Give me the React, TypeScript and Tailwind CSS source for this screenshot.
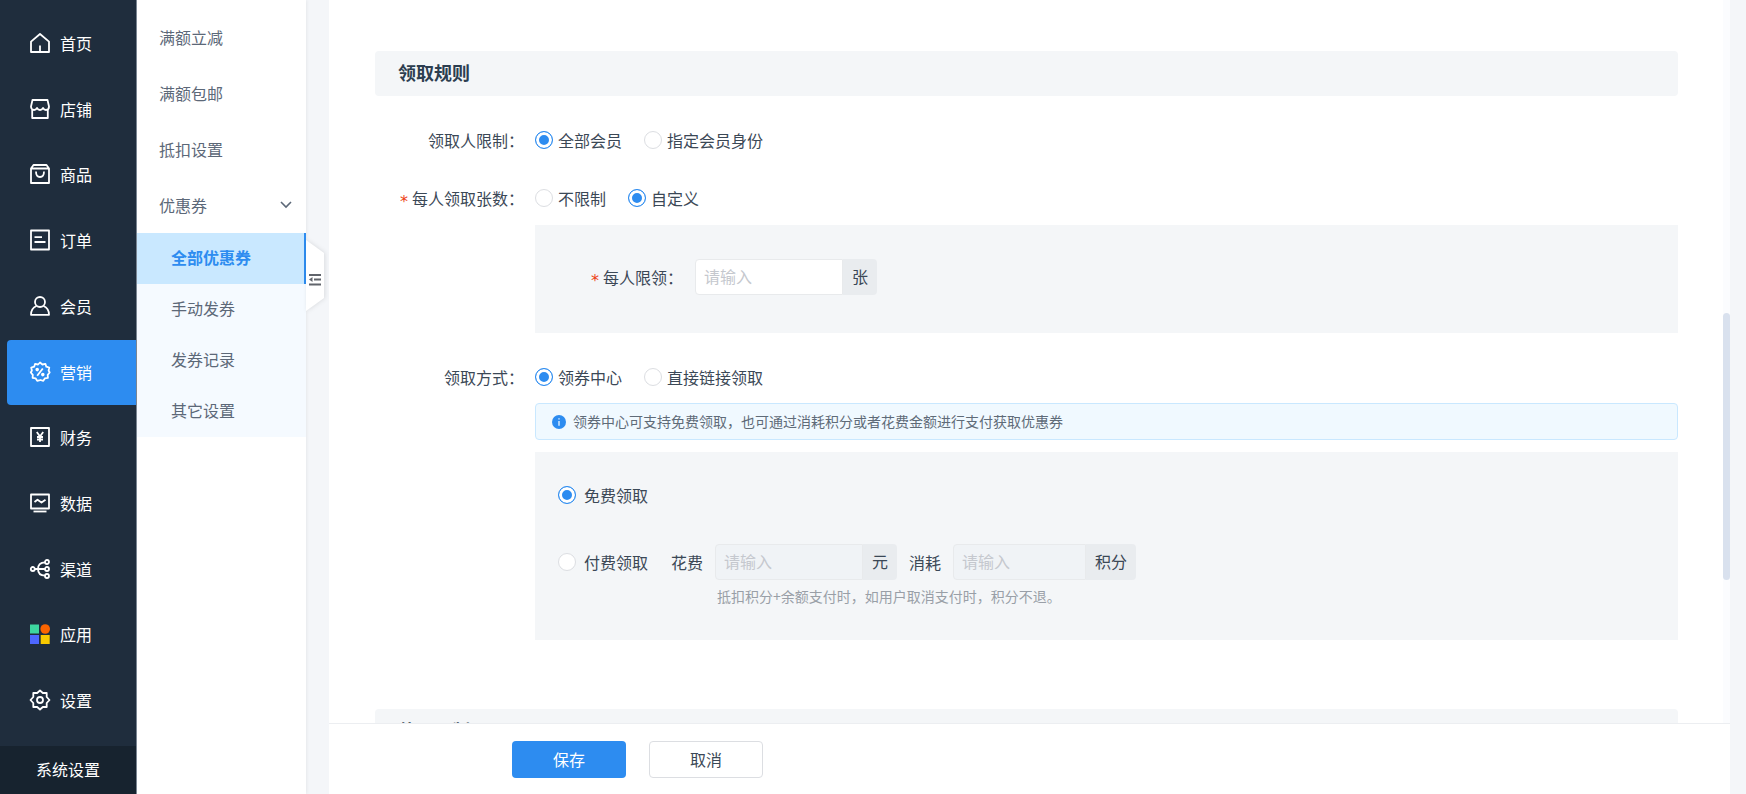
import type { ReactNode } from 'react';

const menu = [
  { name: '首页', icon: 'home' },
  { name: '店铺', icon: 'shop' },
  { name: '商品', icon: 'goods' },
  { name: '订单', icon: 'order' },
  { name: '会员', icon: 'member' },
  { name: '营销', icon: 'marketing', active: true },
  { name: '财务', icon: 'finance' },
  { name: '数据', icon: 'data' },
  { name: '渠道', icon: 'channel' },
  { name: '应用', icon: 'apps' },
  { name: '设置', icon: 'settings' },
];

const subMenu = ['满额立减', '满额包邮', '抵扣设置'];
const couponMenu = ['全部优惠券', '手动发券', '发券记录', '其它设置'];

const icons: Record<string, ReactNode> = {
  home: (
    <>
      <path d="M1 8.600 10 1l9 7.600V19H1z" />
      <path d="M10 12.500V19" />
    </>
  ),
  shop: (
    <>
      <path d="M2.500 1h15L19 7.500c0 2-1.300 3.500-3 3.500s-2.500-1-3-2c-.5 1-1.500 2-3 2s-2.500-1-3-2c-.5 1-1.300 2-3 2s-3-1.500-3-3.500z" />
      <path d="M2.200 10.500V19h15.600v-8.500" />
    </>
  ),
  goods: (
    <>
      <path d="M1 4.500h18V19H1zM1 4.500 3.500 1h13L19 4.500" />
      <path d="M6 7.500c0 3.300 1.500 5.500 4 5.500s4-2.200 4-5.500" />
    </>
  ),
  order: (
    <>
      <path d="M1 .5h18v19H1z" />
      <path d="M4.500 7.200H12M4.500 12H15.500" />
    </>
  ),
  member: (
    <>
      <circle cx="10" cy="6" r="5" />
      <path d="M6.500 10C3.500 11.300 1 14 1 18.800h18c0-4.800-2.500-7.500-5.500-8.800" />
    </>
  ),
  marketing: (
    <>
      <path d="m10 .5 2.400 2 3-.7.900 2.900 3 .9-.7 2.900 1.100 2-2 2.300.2 3-3 .5-1.600 2.600-2.800-.9-.5.200-2.800.7-1.600-2.600-3-.5.2-3-2-2.300 1.100-2-.7-2.900 3-.9.9-2.900 3 .7z" />
      <path d="m12.800 6.500-5.600 7.200" />
      <circle cx="7.200" cy="7.600" r=".9" />
      <circle cx="12.800" cy="12.600" r=".9" />
    </>
  ),
  finance: (
    <>
      <path d="M1 1h18v18H1z" />
      <path d="M6.800 5 10 9.500 13.200 5M10 9.500V15M7 10h6M7 12.500h6" />
    </>
  ),
  data: (
    <>
      <path d="M1 1.500h18v14H1z" />
      <path d="M3.500 18.500h13" />
      <path d="m4.500 9 3-2.300 4 2.800 4-2.800" />
    </>
  ),
  channel: (
    <>
      <circle cx="2.800" cy="10" r="2" />
      <circle cx="17" cy="3" r="2" />
      <circle cx="17" cy="10" r="2" />
      <circle cx="17" cy="17" r="2" />
      <path d="M4.800 10H15M15 3.300C10 3.500 8 6.500 8 10s2 6.500 7 6.700" />
    </>
  ),
  apps: (
    <g stroke="none">
      <path fill="#3dd6a0" d="M0 .5h9v9H0z" />
      <circle fill="#fa6400" cx="15.200" cy="5" r="4.800" />
      <path fill="#4d67ff" d="M0 11h9v9H0z" />
      <path fill="#f7c900" d="M10.700 11h9v9h-9z" />
    </g>
  ),
  settings: (
    <>
      <path d="m10 .5 2.800 2.500h3.900v4L19.500 10l-2.800 3v4h-3.900L10 19.500 7.200 17H3.300v-4L.5 10l2.800-3V3h3.900z" />
      <circle cx="10" cy="10" r="3" />
    </>
  ),
};

function Icon({ name }: { name: string }) {
  return (
    <svg viewBox="0 0 20 20" className="size-5 shrink-0 overflow-visible" fill="none" stroke="currentColor" strokeWidth="1.800" strokeLinejoin="round" aria-hidden="true">
      {icons[name]}
    </svg>
  );
}

function Radio({ name, label, checked, wide }: { name: string; label: string; checked?: boolean; wide?: boolean }) {
  return (
    <label className={`flex items-center ${wide ? 'gap-2' : 'gap-[5px]'}`}>
      <input
        type="radio"
        name={name}
        defaultChecked={checked}
        className="size-[18px] shrink-0 appearance-none rounded-full border border-[#dcdee2] bg-white checked:border-[#2d8cf0] checked:bg-[#2d8cf0] checked:shadow-[inset_0_0_0_3px_#fff]"
      />
      {label}
    </label>
  );
}

function Required() {
  return <span className="pt-2 font-['DejaVu_Sans',sans-serif] leading-none text-[#ed4014]">*</span>;
}

function Row({ label, required, children }: { label: string; required?: boolean; children: ReactNode }) {
  return (
    <div className="flex h-9 items-center pb-[2px]">
      <div className="flex w-40 shrink-0 items-center justify-end gap-1 pr-[11px]">
        {required && <Required />}
        <span>{label}：</span>
      </div>
      <div className="flex items-center gap-[22px]">{children}</div>
    </div>
  );
}

function SectionTitle({ children }: { children: ReactNode }) {
  return <h2 className="rounded-sm bg-[#f4f6f8] pb-[2px] pl-[23px] text-lg leading-[43px] font-bold text-[#2c3e50]">{children}</h2>;
}

export default function App() {
  return (
    <div lang="zh-CN" className="flex h-screen overflow-hidden bg-[#f4f6f9] font-['Noto_Sans_CJK_SC',sans-serif] text-base leading-6 text-[#3b4856]">
      <aside className="flex w-[137px] shrink-0 flex-col border-r border-[#7b8794] bg-[#1f2d3d] text-white">
        <nav className="flex flex-1 flex-col pt-[11px] pb-3">
          {menu.map((item) => (
            <a
              key={item.name}
              href="#"
              className={`ml-[7px] flex flex-1 items-center gap-[10px] rounded-l-sm pb-[2px] pl-[23px] ${item.active ? 'bg-[#2d8cf0]' : ''}`}
            >
              <Icon name={item.icon} />
              {item.name}
            </a>
          ))}
        </nav>
        <a href="#" className="bg-[#17232f] pb-[2px] text-center leading-[46px]">系统设置</a>
      </aside>

      <aside className="relative w-[169px] shrink-0 bg-white pt-[9px] text-[#5c6878] shadow-[1px_0_3px_rgba(0,0,0,0.06)]">
        {subMenu.map((name) => (
          <a key={name} href="#" className="flex h-14 items-center pl-[22px]">{name}</a>
        ))}
        <button type="button" className="flex h-14 w-full items-center justify-between pr-[14px] pl-[22px]">
          优惠券
          <svg viewBox="0 0 12 8" className="w-3" fill="none" stroke="currentColor" strokeWidth="1.600" aria-hidden="true">
            <path d="m1 1 5 5 5-5" />
          </svg>
        </button>
        <div className="bg-[#f5faff]">
          {couponMenu.map((name, i) => (
            <a
              key={name}
              href="#"
              className={`flex h-[51px] items-center pb-1 pl-[34px] ${i === 0 ? 'border-r-2 border-[#2d8cf0] bg-[#c9e8ff] font-bold text-[#2d8cf0]' : ''}`}
            >
              {name}
            </a>
          ))}
        </div>
        {/* collapse handle */}
        <button type="button" aria-label="收起菜单" className="absolute top-[240px] left-full z-10 h-[72px] w-5">
          <svg viewBox="0 0 20 72" className="h-[72px] w-5 overflow-visible drop-shadow-[1px_0_2px_rgba(0,0,0,0.1)]" aria-hidden="true">
            <path fill="#fff" d="M0 0 18 13v45L0 71z" />
            <path stroke="#60646b" strokeWidth="2" fill="none" d="M3 35h12M8 39.500h7M3 44.500h12" />
            <path fill="#60646b" d="m3 39.500 3.500-2.500v5z" />
          </svg>
        </button>
      </aside>

      <main className="mr-4 ml-[23px] flex min-w-0 flex-1 flex-col bg-white">
        <div className="flex min-h-0 flex-1 overflow-hidden">
          <form className="min-w-0 flex-1 pt-[51px] pr-[45px] pl-[46px]">
            <SectionTitle>领取规则</SectionTitle>
            <div className="mt-[27px]">
              <Row label="领取人限制">
                <Radio name="limit" label="全部会员" checked />
                <Radio name="limit" label="指定会员身份" />
              </Row>
            </div>
            <div className="mt-[22px]">
              <Row label="每人领取张数" required>
                <Radio name="count" label="不限制" />
                <Radio name="count" label="自定义" checked />
              </Row>
              <div className="mt-2 ml-40 flex items-center bg-[#f4f6f8] pt-[34px] pb-[38px] pl-14">
                <div className="flex items-center gap-1">
                  <Required />
                  <label htmlFor="per">每人限领：</label>
                </div>
                <div className="ml-3 flex h-9">
                  <input id="per" placeholder="请输入" className="w-[148px] rounded-l-sm border border-[#e8eaec] bg-white px-2 pb-[2px] placeholder:text-[#c5c8ce]" />
                  <span className="flex items-center rounded-r-sm bg-[#e9ecef] px-[9px] pb-[2px]">张</span>
                </div>
              </div>
            </div>
            <div className="mt-[27px]">
              <Row label="领取方式">
                <Radio name="way" label="领券中心" checked />
                <Radio name="way" label="直接链接领取" />
              </Row>
              <div className="mt-[7px] ml-40 flex items-center gap-[7px] rounded-sm border border-[#c9e8ff] bg-[#f0f9ff] px-4 py-[7px] text-sm leading-[21px] text-[#5f6b78]">
                <svg viewBox="0 0 14 14" className="size-[14px] shrink-0" aria-hidden="true">
                  <circle cx="7" cy="7" r="7" fill="#2d8cf0" />
                  <path d="M7 3.200v1.400M7 6v4.800" stroke="#fff" strokeWidth="1.200" />
                </svg>
                领券中心可支持免费领取，也可通过消耗积分或者花费金额进行支付获取优惠券
              </div>
              <div className="mt-3 ml-40 bg-[#f4f6f8] pt-[31px] pb-[34px] pl-[23px]">
                <Radio name="pay" label="免费领取" checked wide />
                <div className="mt-[37px] flex h-9 items-center">
                  <Radio name="pay" label="付费领取" wide />
                  <label htmlFor="money" className="ml-[23px]">花费</label>
                  <div className="ml-3 flex h-9">
                    <input id="money" disabled placeholder="请输入" className="w-[148px] rounded-l-sm border border-[#e8eaec] bg-[#f0f3f6] px-2 pb-[2px] placeholder:text-[#c5c8ce]" />
                    <span className="flex items-center rounded-r-sm bg-[#e9ecef] px-[9px] pb-[2px]">元</span>
                  </div>
                  <label htmlFor="points" className="ml-3">消耗</label>
                  <div className="ml-3 flex h-9">
                    <input id="points" disabled placeholder="请输入" className="w-[133px] rounded-l-sm border border-[#e8eaec] bg-[#f0f3f6] px-2 pb-[2px] placeholder:text-[#c5c8ce]" />
                    <span className="flex items-center rounded-r-sm bg-[#e9ecef] px-[9px] pb-[2px]">积分</span>
                  </div>
                </div>
                <p className="mt-[6px] pl-[159px] text-sm leading-5 text-[#999fa7]">抵扣积分+余额支付时，如用户取消支付时，积分不退。</p>
              </div>
            </div>
            <div className="mt-[69px]">
              <SectionTitle>使用限制</SectionTitle>
            </div>
          </form>
          <div className="w-[7px] shrink-0 bg-[#fbfcfe] pt-[313px]">
            <div className="h-[267px] rounded-full bg-[#d9e1ee]" />
          </div>
        </div>
        <footer className="flex shrink-0 gap-[23px] border-t border-[#eceef1] pt-[17px] pb-4 pl-[183px]">
          <button type="button" className="h-[37px] w-[114px] rounded-sm bg-[#2d8cf0] pb-[2px] text-white">保存</button>
          <button type="button" className="h-[37px] w-[114px] rounded-sm border border-[#dcdee2] bg-white pb-[2px]">取消</button>
        </footer>
      </main>
    </div>
  );
}
